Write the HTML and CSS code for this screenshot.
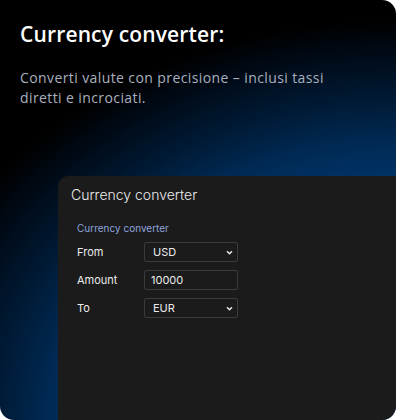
FILE: index.html
```html
<!DOCTYPE html>
<html lang="it">

<head>
    <meta charset="UTF-8">
    <meta name="viewport" content="width=device-width, initial-scale=1.0">
    <title>Currency converter</title>
    <link rel="stylesheet" href="styles.css">
</head>

<body>
    <div class="card">
        <h1>Currency converter:</h1>
        <p class="lead">Converti valute con precisione – inclusi tassi diretti e incrociati.</p>

        <div class="panel">
            <h2>Currency converter</h2>

            <form class="converter">
                <div class="legend">Currency converter</div>

                <label for="from">From</label>
                <div class="field">
                    <select id="from">
                        <option>USD</option>
                    </select>
                    <svg class="chevron" viewBox="0 0 8 6" width="7" height="5">
                        <path d="M1 1.5 L4 4.5 L7 1.5" fill="none" stroke="#e8e8e8" stroke-width="1.8" />
                    </svg>
                </div>

                <label for="amount">Amount</label>
                <div class="field">
                    <input id="amount" type="text" value="10000">
                </div>

                <label for="to">To</label>
                <div class="field">
                    <select id="to">
                        <option>EUR</option>
                    </select>
                    <svg class="chevron" viewBox="0 0 8 6" width="7" height="5">
                        <path d="M1 1.5 L4 4.5 L7 1.5" fill="none" stroke="#e8e8e8" stroke-width="1.8" />
                    </svg>
                </div>
            </form>
        </div>
    </div>
</body>

</html>
```

FILE: styles.css
```css
* {
    margin: 0;
    padding: 0;
    box-sizing: border-box;
}

body {
    background-color: #fff;
    font-family: 'Open Sans', 'Lato', sans-serif;
}

.card {
    width: 396px;
    height: 420px;
    display: flex;
    flex-direction: column;
    padding: 20px 20px 0;
    border-radius: 0 14px 14px 14px;
    overflow: hidden;
    background: radial-gradient(ellipse 500px 400px at 396px 420px, #004488 0%, #003870 55%, #002a55 69%, #001a35 80%, #000a16 92%, #000 100%);
}

h1 {
    font-size: 21px;
    line-height: 28px;
    font-weight: 600;
    letter-spacing: 0.15px;
    color: #fff;
}

.lead {
    max-width: 335px;
    margin-top: 20px;
    font-size: 14px;
    line-height: 20px;
    letter-spacing: 0.4px;
    color: #a9b0bf;
}

.panel {
    flex: 1;
    margin: 68px -20px 0 38px;
    padding: 8px 13px;
    background-color: #1b1b1b;
    border-radius: 10px 0 0 0;
    font-family: 'Inter', 'Open Sans', sans-serif;
}

h2 {
    font-size: 14px;
    line-height: 22px;
    font-weight: 300;
    color: #ececec;
}

.converter {
    margin-top: 15px;
    padding-left: 6px;
    display: grid;
    grid-template-columns: 67px 94px;
    row-gap: 8px;
    align-items: center;
    font-size: 11px;
}

.legend {
    grid-column: 1 / 3;
    color: #8ea3dc;
    font-size: 10px;
    line-height: 14px;
    margin-bottom: -1px;
}

label {
    color: #ececec;
}

.field {
    position: relative;
}

select,
input {
    appearance: none;
    display: block;
    width: 100%;
    height: 20px;
    padding: 0 6px;
    font-family: inherit;
    font-size: 11px;
    color: #ececec;
    background-color: #1b1b1b;
    border: 1px solid #3b3b3b;
    border-radius: 2px;
    outline: none;
}

select {
    padding-left: 8px;
}

.chevron {
    position: absolute;
    right: 5px;
    top: 8px;
    pointer-events: none;
}
```
